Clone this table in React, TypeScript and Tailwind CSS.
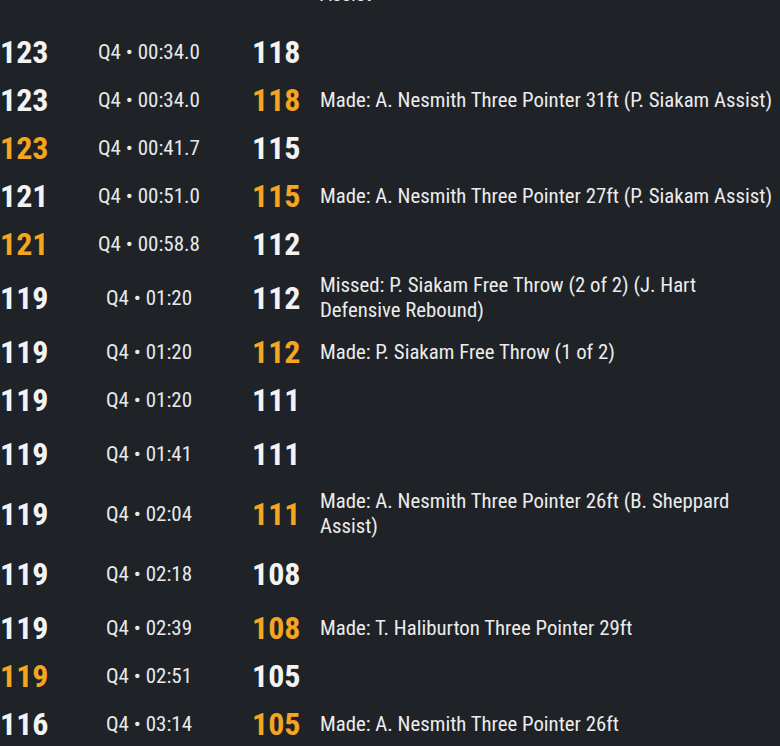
type Row = {
  left: string;
  leftHi?: boolean;
  time: string;
  right: string;
  rightHi?: boolean;
  desc?: string;
  tall?: boolean;
};

const rows: Row[] = [
  { left: "123", time: "Q4 • 00:34.0", right: "118" },
  { left: "123", time: "Q4 • 00:34.0", right: "118", rightHi: true, desc: "Made: A. Nesmith Three Pointer 31ft (P. Siakam Assist)" },
  { left: "123", leftHi: true, time: "Q4 • 00:41.7", right: "115" },
  { left: "121", time: "Q4 • 00:51.0", right: "115", rightHi: true, desc: "Made: A. Nesmith Three Pointer 27ft (P. Siakam Assist)" },
  { left: "121", leftHi: true, time: "Q4 • 00:58.8", right: "112" },
  { left: "119", time: "Q4 • 01:20", right: "112", desc: "Missed: P. Siakam Free Throw (2 of 2) (J. Hart Defensive Rebound)", tall: true },
  { left: "119", time: "Q4 • 01:20", right: "112", rightHi: true, desc: "Made: P. Siakam Free Throw (1 of 2)" },
  { left: "119", time: "Q4 • 01:20", right: "111" },
  { left: "119", time: "Q4 • 01:41", right: "111", tall: true },
  { left: "119", time: "Q4 • 02:04", right: "111", rightHi: true, desc: "Made: A. Nesmith Three Pointer 26ft (B. Sheppard Assist)", tall: true },
  { left: "119", time: "Q4 • 02:18", right: "108", tall: true },
  { left: "119", time: "Q4 • 02:39", right: "108", rightHi: true, desc: "Made: T. Haliburton Three Pointer 29ft" },
  { left: "119", leftHi: true, time: "Q4 • 02:51", right: "105" },
  { left: "116", time: "Q4 • 03:14", right: "105", rightHi: true, desc: "Made: A. Nesmith Three Pointer 26ft" },
];

function PlayRow({ r }: { r: Row }) {
  return (
    <div
      className={
        r.tall
          ? "grid grid-cols-[46px_206px_68px_1fr] items-center h-[60px]"
          : "grid grid-cols-[46px_206px_68px_1fr] items-center h-[48px]"
      }
    >
      <div
        className={
          r.leftHi
            ? "text-[32px] leading-[38px] font-bold text-[#f4a521]"
            : "text-[32px] leading-[38px] font-bold text-[#f3f3f3]"
        }
      >
        {r.left}
      </div>
      <div className="text-center text-[21px] leading-[25px] text-[#e9e9e9]">{r.time}</div>
      <div
        className={
          r.rightHi
            ? "text-[32px] leading-[38px] font-bold text-[#f4a521]"
            : "text-[32px] leading-[38px] font-bold text-[#f3f3f3]"
        }
      >
        {r.right}
      </div>
      <div className="text-[20.8px] leading-[25px] text-[#ececec]">{r.desc}</div>
    </div>
  );
}

export default function App() {
  return (
    <div className="h-screen w-full overflow-hidden bg-[#1f2226] font-['Roboto_Condensed',sans-serif]">
      <div className="h-[28px] overflow-hidden grid grid-cols-[320px_1fr]">
        <div />
        <div className="-mt-[18.5px] text-[20.8px] leading-[25px] text-[#ececec]">Assist</div>
      </div>
      {rows.map((r, i) => (
        <PlayRow key={i} r={r} />
      ))}
    </div>
  );
}
